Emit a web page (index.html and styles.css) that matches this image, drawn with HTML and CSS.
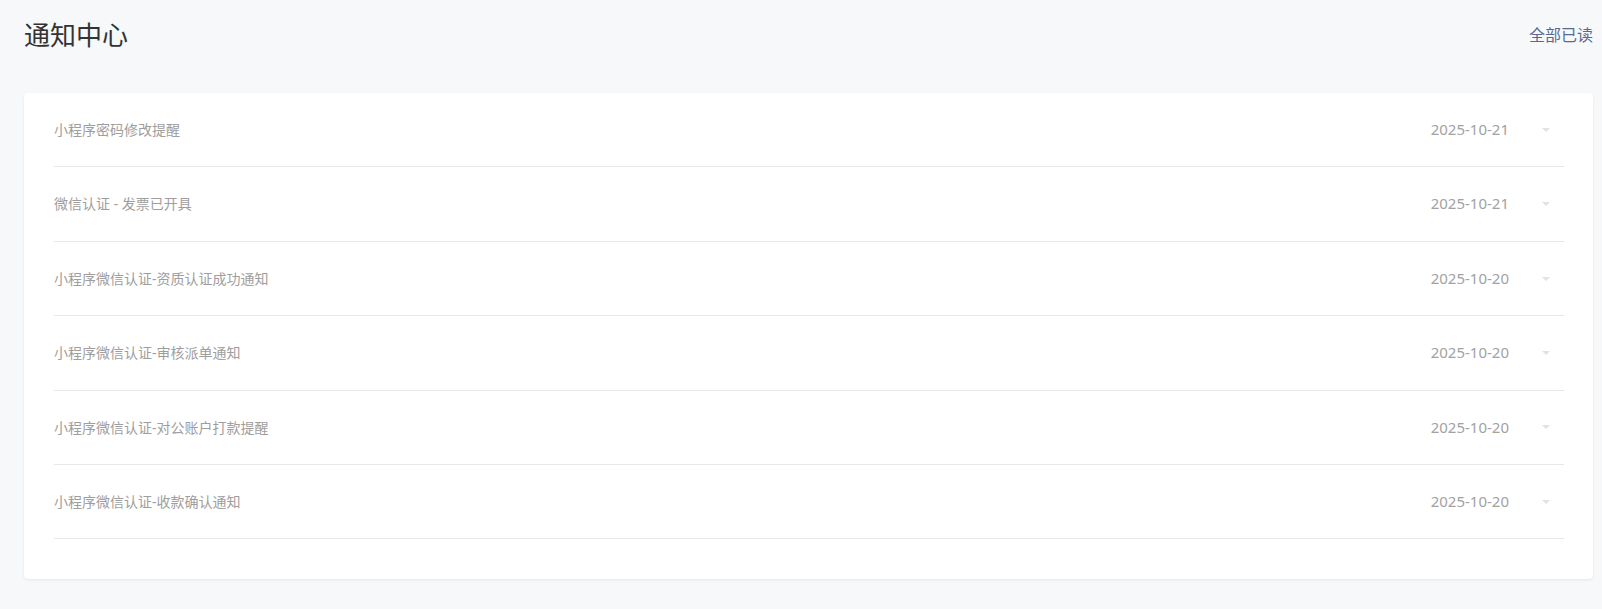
FILE: index.html
```html
<!DOCTYPE html>
<html lang="zh-CN">
<head>
<meta charset="utf-8">
<title>通知中心</title>
<link rel="stylesheet" href="styles.css">
</head>
<body>
<div class="page">
  <div class="header">
    <h1 class="title">通知中心</h1>
    <a class="read-all">全部已读</a>
  </div>
  <div class="card">
    <div class="row"><span class="row-title">小程序密码修改提醒</span><span class="row-date">2025-10-21</span><span class="caret"></span></div>
    <div class="row"><span class="row-title">微信认证 - 发票已开具</span><span class="row-date">2025-10-21</span><span class="caret"></span></div>
    <div class="row"><span class="row-title">小程序微信认证-资质认证成功通知</span><span class="row-date">2025-10-20</span><span class="caret"></span></div>
    <div class="row"><span class="row-title">小程序微信认证-审核派单通知</span><span class="row-date">2025-10-20</span><span class="caret"></span></div>
    <div class="row"><span class="row-title">小程序微信认证-对公账户打款提醒</span><span class="row-date">2025-10-20</span><span class="caret"></span></div>
    <div class="row"><span class="row-title">小程序微信认证-收款确认通知</span><span class="row-date">2025-10-20</span><span class="caret"></span></div>
  </div>
</div>
</body>
</html>
```

FILE: styles.css
```css
html, body {
  margin: 0;
  padding: 0;
  background: #f7f8fa;
  font-family: "Noto Sans", "Noto Sans CJK SC", sans-serif;
}

.page {
  padding: 17px 9px 30px 24px;
}

.header {
  display: flex;
  align-items: center;
  justify-content: space-between;
  height: 36px;
  margin-bottom: 40px;
}

.title {
  margin: 0;
  font-size: 26px;
  font-weight: 400;
  line-height: 36px;
  color: #333333;
}

.read-all {
  font-size: 16px;
  line-height: 22px;
  color: #5a6894;
  cursor: pointer;
}

.card {
  background: #ffffff;
  border-radius: 4px;
  box-shadow: 0 1px 3px rgba(0, 0, 0, 0.08);
  padding: 0 29px 40px 30px;
}

.row {
  display: flex;
  align-items: center;
  padding: 26px 0;
  border-bottom: 1px solid #e6e8eb;
  line-height: 21.4px;
}

.row-title {
  flex: 1;
  font-size: 14px;
  color: #9e9e9e;
}

.row-date {
  font-size: 15px;
  color: #a2a2a2;
}

.caret {
  width: 0;
  height: 0;
  margin-left: 33px;
  margin-right: 14px;
  border-left: 4px solid transparent;
  border-right: 4px solid transparent;
  border-top: 4px solid #e2e2e2;
}
```
